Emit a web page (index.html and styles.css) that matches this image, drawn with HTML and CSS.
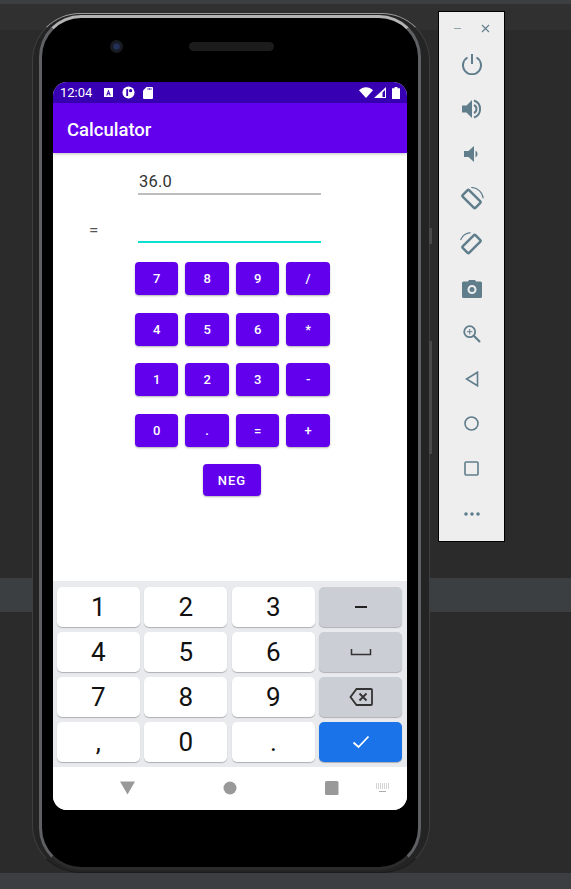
FILE: index.html
```html
<!DOCTYPE html>
<html lang="en">
<head>
  <meta charset="UTF-8">
  <meta name="viewport" content="width=device-width, initial-scale=1.0">
  <title>Calculator - Emulator</title>
  <link rel="stylesheet" href="styles.css">
</head>
<body>

  <!-- IDE background strips -->
  <div class="ide">
    <div class="strip strip-top"></div>
    <div class="strip strip-tabs"></div>
    <div class="strip strip-main"></div>
    <div class="strip strip-mid"></div>
    <div class="strip strip-lower"></div>
    <div class="strip strip-bottom"></div>
  </div>

  <div class="phone">
    <div class="phone-side phone-power"></div>
    <div class="phone-side phone-volume"></div>
    <div class="phone-body">
      <div class="phone-top">
        <div class="camera"></div>
        <div class="speaker"></div>
      </div>

      <div class="screen">
        <div class="statusbar">
          <span class="clock">12:04</span>
          <svg class="st-icon" width="11" height="11" viewBox="0 0 11 11"><path fill="#fff" fill-rule="evenodd" d="M1 1h9v9H1zM5.500 2.600 3.200 8.400h1.200l.4-1.100h1.400l.4 1.100h1.200zM5.500 4.800l.4 1.500h-.8z"/></svg>
          <svg class="st-icon" width="13" height="13" viewBox="0 0 14 14"><circle cx="7" cy="7" r="6.500" fill="#fff"/><rect x="4.600" y="3.400" width="2" height="7.400" fill="#3700b3"/><circle cx="9.300" cy="5" r="1.700" fill="#3700b3"/></svg>
          <svg class="st-icon" width="10" height="12" viewBox="0 0 10 12"><path fill="#fff" d="M3.500 0H9a1 1 0 0 1 1 1v10a1 1 0 0 1-1 1H1a1 1 0 0 1-1-1V3.500z"/><path stroke="#3700b3" stroke-width=".7" d="M5 1v2M6.500 1v2M8 1v2"/></svg>
          <span class="status-gap"></span>
          <svg width="14" height="11" viewBox="0 0 14 11"><path fill="#fff" d="M0 3.200C4-.9 10-.9 14 3.200L7 11z"/></svg>
          <svg class="st-signal" width="12" height="11" viewBox="0 0 12 11"><path fill="#fff" fill-rule="evenodd" d="M12 0v11H0zM11 3 8.500 5.500V10H11z"/></svg>
          <svg width="8" height="12" viewBox="0 0 8 12"><path fill="#fff" d="M2.500 0h3v1.200H8V12H0V1.200h2.500z"/></svg>
        </div>

        <div class="appbar">Calculator</div>

        <div class="content">
          <div class="field field-first">36.0</div>
          <div class="result-row">
            <span class="equals">=</span>
            <div class="field field-active"></div>
          </div>

          <div class="pad">
            <button class="calc-btn">7</button>
            <button class="calc-btn">8</button>
            <button class="calc-btn">9</button>
            <button class="calc-btn">/</button>
            <button class="calc-btn">4</button>
            <button class="calc-btn">5</button>
            <button class="calc-btn">6</button>
            <button class="calc-btn">*</button>
            <button class="calc-btn">1</button>
            <button class="calc-btn">2</button>
            <button class="calc-btn">3</button>
            <button class="calc-btn">-</button>
            <button class="calc-btn">0</button>
            <button class="calc-btn">.</button>
            <button class="calc-btn">=</button>
            <button class="calc-btn">+</button>
          </div>
          <button class="calc-btn neg">NEG</button>
        </div>

        <div class="keyboard">
          <div class="key">1</div>
          <div class="key">2</div>
          <div class="key">3</div>
          <div class="key key-gray">
            <svg width="14" height="2" viewBox="0 0 14 2"><rect width="12" height="2" x="1" fill="#222"/></svg>
          </div>
          <div class="key">4</div>
          <div class="key">5</div>
          <div class="key">6</div>
          <div class="key key-gray">
            <svg width="22" height="8" viewBox="0 0 22 8"><path fill="none" stroke="#333" stroke-width="1.500" d="M1.500 1v5.500h19V1"/></svg>
          </div>
          <div class="key">7</div>
          <div class="key">8</div>
          <div class="key">9</div>
          <div class="key key-gray">
            <svg width="24" height="18" viewBox="0 0 24 18"><path fill="none" stroke="#333" stroke-width="1.800" d="M7.500 1H22a1 1 0 0 1 1 1v14a1 1 0 0 1-1 1H7.500L1.500 9zM10.500 5.500l7 7M17.500 5.500l-7 7"/></svg>
          </div>
          <div class="key key-low">,</div>
          <div class="key">0</div>
          <div class="key key-low">.</div>
          <div class="key key-blue">
            <svg width="18" height="14" viewBox="0 0 18 14"><path fill="none" stroke="#fff" stroke-width="1.800" d="M1.500 7.500 6.500 12 16.500 1.500"/></svg>
          </div>
        </div>

        <div class="navbar">
          <svg width="15" height="14" viewBox="0 0 16 14"><path fill="#999" d="M0 0h16L8 14z"/></svg>
          <svg width="14" height="14" viewBox="0 0 14 14"><circle cx="7" cy="7" r="6.500" fill="#999"/></svg>
          <svg width="14" height="14" viewBox="0 0 14 14"><rect width="13.500" height="14" rx="1.500" fill="#999"/></svg>
          <svg class="nav-kbd" width="15" height="10" viewBox="0 0 15 10"><path stroke="#aaa" stroke-dasharray="1 1" d="M1 1h13M1 3h13M1 5h13"/><path stroke="#aaa" d="M4 8.500h7"/></svg>
        </div>
      </div>
    </div>
  </div>

  <div class="tools">
    <div class="tools-head">
      <svg width="9" height="9" viewBox="0 0 9 9"><path stroke="#8fa3ad" d="M1 4.500h7"/></svg>
      <svg width="9" height="9" viewBox="0 0 9 9"><path stroke="#607d8b" stroke-width="1.100" d="M1 1l7 7M8 1 1 8"/></svg>
    </div>
    <div class="tool"><svg width="22" height="22" viewBox="0 0 22 22"><path fill="none" stroke="#607d8b" stroke-width="2" d="M6.500 4.500a9 9 0 1 0 9 0M11 1v10"/></svg></div>
    <div class="tool"><svg width="22" height="20" viewBox="0 0 22 20"><path fill="#607d8b" d="M1 6.500h4.500L11 1v18l-5.500-5.500H1z"/><path fill="none" stroke="#607d8b" stroke-width="2" d="M13 6a4.500 4.500 0 0 1 0 8M13 1.500a9 9 0 0 1 0 17"/></svg></div>
    <div class="tool"><svg width="16" height="16" viewBox="0 0 16 16"><path fill="#607d8b" d="M0 5h4.500L10 0v16l-5.500-5H0z"/><path fill="#607d8b" d="M11.500 4.500a4 4 0 0 1 0 7z"/></svg></div>
    <div class="tool"><svg width="24" height="24" viewBox="0 0 24 24"><rect x="7" y="3" width="9" height="18" rx="1" fill="none" stroke="#607d8b" stroke-width="2.500" transform="rotate(-45 11.500 12)"/><path fill="none" stroke="#607d8b" stroke-width="1.200" d="M11.200.5A12 12 0 0 1 23.200 11.300"/></svg></div>
    <div class="tool"><svg width="24" height="24" viewBox="0 0 24 24"><rect x="7" y="3" width="9" height="18" rx="1" fill="none" stroke="#607d8b" stroke-width="2.500" transform="rotate(45 11.500 12)"/><path fill="none" stroke="#607d8b" stroke-width="1.200" d="M.5 8A12 12 0 0 1 10.500.7"/></svg></div>
    <div class="tool"><svg width="20" height="18" viewBox="0 0 20 18"><path fill="#607d8b" fill-rule="evenodd" d="M6 1.500 7 0h6l1 1.500h4.500A1.500 1.500 0 0 1 20 3v13.500a1.500 1.500 0 0 1-1.500 1.500h-17A1.500 1.500 0 0 1 0 16.500V3a1.500 1.500 0 0 1 1.500-1.500zM10 5a4.500 4.500 0 1 0 0 9 4.500 4.500 0 0 0 0-9zM10 7a2.500 2.500 0 1 1 0 5 2.500 2.500 0 0 1 0-5z"/></svg></div>
    <div class="tool"><svg width="18" height="18" viewBox="0 0 18 18"><g fill="none" stroke="#607d8b"><circle cx="6.700" cy="6.700" r="5.500" stroke-width="1.800"/><path stroke-width="2.200" d="M10.800 10.800 17 17"/><path stroke-width="1" d="M4 6.700h5.400M6.700 4v5.400"/></g></svg></div>
    <div class="tool"><svg width="14" height="16" viewBox="0 0 14 16"><path fill="none" stroke="#607d8b" stroke-width="1.600" d="M12.500 1.200v13.600L1.500 8z"/></svg></div>
    <div class="tool"><svg width="15" height="15" viewBox="0 0 15 15"><circle cx="7.500" cy="7.500" r="6.500" fill="none" stroke="#607d8b" stroke-width="1.600"/></svg></div>
    <div class="tool"><svg width="15" height="15" viewBox="0 0 15 15"><rect x="1" y="1" width="13" height="13" rx="1" fill="none" stroke="#607d8b" stroke-width="1.600"/></svg></div>
    <div class="tool"><svg width="16" height="4" viewBox="0 0 16 4"><circle cx="2" cy="2" r="1.800" fill="#607d8b"/><circle cx="8" cy="2" r="1.800" fill="#607d8b"/><circle cx="14" cy="2" r="1.800" fill="#607d8b"/></svg></div>
  </div>

</body>
</html>
```

FILE: styles.css
```css
* { box-sizing: border-box; }

body {
  margin: 0;
  height: 889px;
  overflow: hidden;
  background-color: #2b2b2b;
  font-family: Roboto, "Liberation Sans", sans-serif;
}

/* IDE behind the emulator */
.ide {
  display: flex;
  flex-direction: column;
  height: 889px;
}
.strip-top { height: 4px; background-color: #3c3f41; }
.strip-tabs { height: 26px; background-color: #303030; }
.strip-main { height: 548px; background-color: #2b2b2b; }
.strip-mid { height: 34px; background-color: #3c3f41; }
.strip-lower { height: 261px; background-color: #2b2b2b; }
.strip-bottom { height: 16px; background-color: #3c3f41; }

/* Phone */
.phone {
  position: absolute;
  left: 32px;
  top: 13px;
  width: 398px;
  height: 860px;
  padding: 1px 8px 2px 6px;
  background: #242424;
  border: 1px solid #3f3f3f;
  border-top-color: #9a9a9a;
  border-bottom-color: #1c1c1c;
  border-radius: 48px;
}
.phone-side {
  position: absolute;
  right: -3px;
  width: 3px;
  background-color: #4a4a4a;
}
.phone-power { top: 214px; height: 16px; }
.phone-volume { top: 327px; height: 113px; }
.phone-body {
  height: 100%;
  padding: 0 11px;
  background-color: #000;
  border: 3px solid #5e6063;
  border-top-color: #b4b4b4;
  border-bottom-color: #2c2c2c;
  border-radius: 42px;
}

.phone-top {
  display: flex;
  align-items: center;
  height: 64px;
  padding: 0 0 8px 57px;
}
.camera {
  width: 13px;
  height: 13px;
  border-radius: 50%;
  background: radial-gradient(circle, #23305a 0 25%, #161a22 45%, #1c1c1c 100%);
}
.speaker {
  width: 85px;
  height: 9px;
  margin-left: 66px;
  border-radius: 5px;
  background-color: #1c1c1c;
}

/* Screen */
.screen {
  width: 354px;
  height: 728px;
  display: flex;
  flex-direction: column;
  overflow: hidden;
  background-color: #fff;
  border-radius: 14px;
}
.statusbar {
  display: flex;
  align-items: center;
  gap: 3px;
  flex: none;
  height: 21px;
  padding: 0 7px;
  background-color: #3700b3;
  color: #fff;
}
.clock { font-size: 13px; margin-right: 8px; }
.st-icon { margin-right: 5px; }
.st-signal { margin: 0 3px 0 -2px; }
.status-gap { flex: 1; }
.appbar {
  flex: none;
  height: 50px;
  padding: 2px 14px 0;
  line-height: 50px;
  background-color: #6200ee;
  color: #fff;
  font-size: 18.500px;
  font-weight: 500;
  box-shadow: 0 1px 3px rgba(0, 0, 0, 0.25);
}

.content {
  flex: 1;
  padding-top: 17px;
}
.field {
  width: 183px;
  margin-left: 85px;
  color: #333;
  font-size: 16.500px;
  letter-spacing: 0.2px;
  line-height: 23px;
  border-bottom: 2px solid #bdbdbd;
}
.field-first { padding-left: 1px; }
.result-row {
  display: flex;
  align-items: flex-end;
  margin-top: 20px;
}
.equals {
  width: 36px;
  margin-left: 36px;
  margin-bottom: 1px;
  color: #555;
  font-size: 17px;
  line-height: 24px;
}
.field-active {
  margin-left: 13px;
  height: 28px;
  border-bottom-color: #0adfd0;
}

.pad {
  display: grid;
  grid-template-columns: repeat(4, 43.300px);
  grid-auto-rows: 33px;
  gap: 17.500px 7.200px;
  margin: 19px 0 0 82px;
}
.calc-btn {
  padding: 0;
  border: none;
  border-radius: 4px;
  background-color: #6200ee;
  color: #fff;
  font-family: inherit;
  font-size: 13px;
  font-weight: 500;
  box-shadow: 0 1px 2px rgba(0, 0, 0, 0.3);
}
.neg {
  display: block;
  width: 58px;
  height: 32px;
  margin: 17.500px 0 0 150px;
  letter-spacing: 1px;
}

/* Keyboard */
.keyboard {
  display: grid;
  flex: none;
  grid-template-columns: repeat(4, 83.300px);
  grid-auto-rows: 40px;
  gap: 5px 4.200px;
  height: 186px;
  padding: 6px 4px 0 3.700px;
  background-color: #e9eaee;
}
.key {
  display: flex;
  align-items: center;
  justify-content: center;
  border-radius: 5px;
  background-color: #fff;
  color: #111;
  font-size: 26px;
  box-shadow: 0 1px 1px rgba(0, 0, 0, 0.25);
}
.key-low { align-items: flex-end; padding-bottom: 2px; line-height: 1.300; }
.key-gray { background-color: #ccced5; }
.key-blue { background-color: #1a73e8; }

.navbar {
  position: relative;
  flex: none;
  display: flex;
  align-items: center;
  justify-content: center;
  gap: 88px;
  height: 43px;
  padding: 0 2px 2px 0;
  background-color: #fff;
}
.nav-kbd {
  position: absolute;
  right: 17px;
  top: 16px;
}

/* Emulator tool window */
.tools {
  position: absolute;
  left: 438px;
  top: 11px;
  width: 67px;
  height: 531px;
  padding-top: 12px;
  background-color: #eeeeef;
  border: 1px solid #000;
}
.tools-head {
  display: flex;
  justify-content: space-between;
  height: 13px;
  padding: 0 14px;
}
.tool {
  display: flex;
  align-items: center;
  justify-content: center;
  height: 45px;
}
.tools-head + .tool { margin-top: 4px; }
```
